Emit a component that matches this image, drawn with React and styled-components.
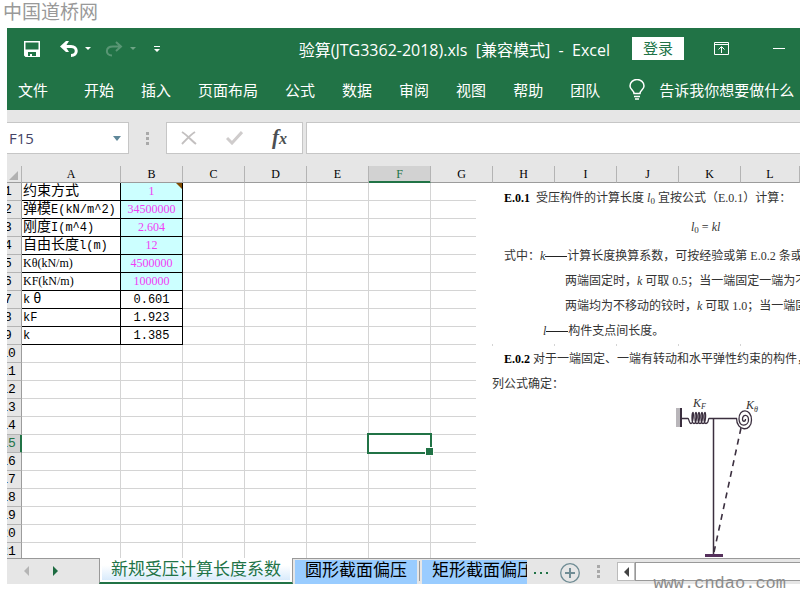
import React, { useState } from "react";
import styled, { createGlobalStyle, css } from "styled-components";

const COLUMNS = ["A", "B", "C", "D", "E", "F", "G", "H", "I", "J", "K", "L"];
const ROW_COUNT = 21;
const MENUS = ["开始", "插入", "页面布局", "公式", "数据", "审阅", "视图", "帮助", "团队"];

const DATA = [
  { cjk: "约束方式", value: "1", input: true, note: true },
  { cjk: "弹模", latin: "E(kN/m^2)", value: "34500000", input: true },
  { cjk: "刚度", latin: "I(m^4)", value: "2.604", input: true },
  { cjk: "自由长度", latin: "l(m)", value: "12", input: true },
  { serif: "Kθ(kN/m)", value: "4500000", input: true },
  { serif: "KF(kN/m)", value: "100000", input: true },
  { latin: "k", theta: "θ", value: "0.601" },
  { latin: "kF", value: "1.923" },
  { latin: "k", value: "1.385" },
];

const TitleBar = () => (
  <Bar $pad>
    <QuickAccess>
      <IconButton aria-label="保存">
        <svg width="16" height="16" viewBox="0 0 16 16">
          <path fill="#fff" fillRule="evenodd" d="M0 0h16v16H1.500L0 14.500zM1.500 1.500v7h13v-7zM4 11v4h2v-2h2v2h4v-4z" />
        </svg>
      </IconButton>
      <IconButton aria-label="撤消" $space={20}>
        <svg width="18" height="16" viewBox="0 0 18 16">
          <path fill="none" stroke="#fff" strokeWidth="3" d="M2 5.500h9c7 0 7 9 0 9" />
          <path fill="#fff" d="M0 5.500 6 0h3L5.500 5.500 9 11H6z" />
        </svg>
      </IconButton>
      <Caret $space={7} />
      <IconButton aria-label="恢复" $space={14} $dim>
        <svg width="18" height="16" viewBox="0 0 18 16">
          <path fill="none" stroke="#fff" strokeWidth="2" d="M15 5.500H8c-8 0-8 9-1 9M11 1l5 4.500L11 10" />
        </svg>
      </IconButton>
      <Caret $space={7} $dim />
      <IconButton aria-label="自定义快速访问工具栏" $space={18}>
        <svg width="6" height="6" viewBox="0 0 6 6">
          <path fill="#fff" d="M0 0h6v1H0zM0 3h6L3 6z" />
        </svg>
      </IconButton>
    </QuickAccess>
    <Title>验算(JTG3362-2018).xls&nbsp; [兼容模式]&nbsp; -&nbsp; Excel</Title>
    <LoginButton>登录</LoginButton>
    <IconButton aria-label="功能区显示选项" $space={30}>
      <svg width="15" height="13" viewBox="0 0 15 13" fill="none" stroke="#fff">
        <path d="M.5.5h14v12H.5zM.5 2.500h14M7.500 11V5M4.500 7.500l3-3 3 3" />
      </svg>
    </IconButton>
    <IconButton aria-label="最小化" $space={44}>
      <svg width="12" height="3" viewBox="0 0 12 3">
        <path fill="#fff" d="M0 1h12v1H0z" />
      </svg>
    </IconButton>
  </Bar>
);

const MenuBar = () => (
  <Bar as="nav">
    <FileMenu>文件</FileMenu>
    <Menus>
      {MENUS.map((name) => (
        <MenuButton key={name}>{name}</MenuButton>
      ))}
    </Menus>
    <TellMe>
      <svg width="16" height="21" viewBox="0 0 16 21" fill="none" stroke="#fff" strokeWidth="1.500">
        <path d="M5 14.500c0-3-4-4-4-7.500a7 6.500 0 0 1 14 0c0 3.500-4 4.500-4 7.500zM5 17.500h6M6 20h4" />
      </svg>
      告诉我你想要做什么
    </TellMe>
  </Bar>
);

const FormulaBar = () => (
  <FormulaRow>
    <NameBox>
      <input aria-label="名称框" defaultValue="F15" />
      <svg width="8" height="5" viewBox="0 0 8 5">
        <path fill="#5f8799" d="M0 0h8L4 5z" />
      </svg>
    </NameBox>
    <Dots />
    <FormulaActions>
      <button aria-label="取消">
        <svg width="16" height="14" viewBox="0 0 16 14" fill="none" stroke="#c3c0c0" strokeWidth="2">
          <path d="M1 1c5 3 9 8 14 12M14 1C9 4 5 9 1 13" />
        </svg>
      </button>
      <button aria-label="输入">
        <svg width="17" height="14" viewBox="0 0 17 14" fill="none" stroke="#cfcccc" strokeWidth="3">
          <path d="M1 7l5 5L16 1" />
        </svg>
      </button>
      <FxButton aria-label="插入函数">
        f<small>x</small>
      </FxButton>
    </FormulaActions>
    <FormulaInput aria-label="编辑栏" />
  </FormulaRow>
);

const LabelCell = ({ row }) => (
  <Cell $boxed $mono={!row.serif}>
    {row.cjk && <Cjk>{row.cjk}</Cjk>}
    {row.latin}
    {row.theta && <Wide>{row.theta}</Wide>}
    {row.serif}
  </Cell>
);

const Grid = () => (
  <Table>
    <colgroup>
      <Col $w={27} />
      <Col $w={99} />
      {COLUMNS.slice(1, -1).map((c) => (
        <Col key={c} $w={62} />
      ))}
      <col />
    </colgroup>
    <thead>
      <tr>
        <ColHead aria-label="全选">
          <svg width="9" height="9" viewBox="0 0 9 9">
            <path fill="#b1b1b1" d="M9 0v9H0z" />
          </svg>
        </ColHead>
        {COLUMNS.map((c) => (
          <ColHead key={c} $active={c === "F"}>
            {c}
          </ColHead>
        ))}
      </tr>
    </thead>
    <tbody>
      {Array.from({ length: ROW_COUNT }, (_, i) => {
        const row = DATA[i];
        return (
          <tr key={i}>
            <RowHead $active={i === 14}>{i + 1}</RowHead>
            {row ? <LabelCell row={row} /> : <Cell />}
            {row ? (
              <Cell $boxed $center $input={row.input} $mono={!row.input} $note={row.note}>
                {row.value}
              </Cell>
            ) : (
              <Cell />
            )}
            {COLUMNS.slice(2).map((c) => (
              <Cell key={c} $selected={i === 14 && c === "F"} />
            ))}
          </tr>
        );
      })}
    </tbody>
  </Table>
);

const Diagram = () => (
  <svg width="140" height="162" viewBox="660 397 140 162" fill="none" stroke="#3b2f3f">
    <path fill="#b9b6ba" stroke="none" d="M676 408h4v19h-4z" />
    <path strokeWidth="2" d="M681 408v19" />
    <path strokeWidth="1.300" d="M682 418.500h6c1 0 1 5 3 5s3-11 2-11-2 11 1 11 3-11 2-11-2 11 1 11 3-11 2-11-2 11 1 11 3-11 2-11-2 11 1 11 3-11 2-11-2 11 1 11 2-5 3-5h28" />
    <path strokeWidth="1.300" d="M736.500 418c0 14 15 14 15 2 0-12-13-12-12.500-1 .5 9 9.500 7 9.500 1 0-6-6-6-6-1 0 3 3 3 3 0" />
    <path strokeWidth="1.500" d="M713.500 418v137" />
    <path stroke="#55305c" strokeWidth="3" d="M705 555.500h18" />
    <path strokeWidth="1.600" strokeDasharray="6 5" d="M741 428l-27 124" />
    <DiagramText x="693" y="407">
      K
    </DiagramText>
    <DiagramText x="701" y="409" $small>
      F
    </DiagramText>
    <DiagramText x="746" y="409">
      K
    </DiagramText>
    <DiagramText x="754" y="412" $small>
      θ
    </DiagramText>
  </svg>
);

const ClausePicture = () => (
  <Picture>
    <Line $indent={28} $top={3}>
      <b>E.0.1</b>&ensp;受压构件的计算长度 <i>l</i>
      <Zero>0</Zero> 宜按公式（E.0.1）计算：
    </Line>
    <Line $indent={215} $top={4}>
      <i>l</i>
      <Zero>0</Zero> = <i>kl</i>
    </Line>
    <Line $indent={28} $top={4}>
      式中：<i>k</i>
      <Dash />
      计算长度换算系数，可按经验或第 E.0.2 条或
    </Line>
    <Line $indent={89}>
      两端固定时，<i>k</i> 可取 0.5；当一端固定一端为不
    </Line>
    <Line $indent={89}>
      两端均为不移动的铰时，<i>k</i> 可取 1.0；当一端固
    </Line>
    <Line $indent={67}>
      <i>l</i>
      <Dash />
      构件支点间长度。
    </Line>
    <Ticks />
    <Line $indent={28}>
      <b>E.0.2</b> 对于一端固定、一端有转动和水平弹性约束的构件，
    </Line>
    <Line $indent={16}>列公式确定：</Line>
    <Figure>
      <Diagram />
    </Figure>
  </Picture>
);

const SheetTabs = () => {
  const [tab, setTab] = useState(0);
  return (
    <TabBar>
      <TabNav>
        <button aria-label="上一张">
          <svg width="5" height="10" viewBox="0 0 5 10">
            <path fill="#b5b5b5" d="M5 0v10L0 5z" />
          </svg>
        </button>
        <button aria-label="下一张">
          <svg width="5" height="10" viewBox="0 0 5 10">
            <path fill="#1d6b41" d="M0 0v10l5-5z" />
          </svg>
        </button>
      </TabNav>
      <Tab $active={tab === 0} onClick={() => setTab(0)}>
        新规受压计算长度系数
      </Tab>
      <Tab $active={tab === 1} onClick={() => setTab(1)}>
        圆形截面偏压
      </Tab>
      <Separator />
      <Tab $cut $active={tab === 2} onClick={() => setTab(2)}>
        矩形截面偏压
      </Tab>
      <MoreTabs aria-label="更多工作表">
        <svg width="14" height="2" viewBox="0 0 14 2">
          <path fill="#217346" d="M0 0h2v2H0zM6 0h2v2H6zM12 0h2v2h-2z" />
        </svg>
      </MoreTabs>
      <AddTab aria-label="新工作表">
        <svg width="20" height="20" viewBox="0 0 20 20" fill="none" stroke="#6f8c94">
          <circle cx="10" cy="10" r="9.300" strokeWidth="1.300" />
          <path strokeWidth="2" d="M5 10h10M10 5v10" />
        </svg>
      </AddTab>
      <Dots />
      <ScrollBar>
        <button aria-label="向左滚动">
          <svg width="5" height="10" viewBox="0 0 5 10">
            <path fill="#444" d="M5 0v10L0 5z" />
          </svg>
        </button>
        <Thumb />
      </ScrollBar>
    </TabBar>
  );
};

const App = () => (
  <Page>
    <GlobalStyle />
    <SiteName>中国道桥网</SiteName>
    <Workbook>
      <Ribbon>
        <TitleBar />
        <MenuBar />
      </Ribbon>
      <FormulaBar />
      <Sheet>
        <Grid />
        <ClausePicture />
      </Sheet>
      <SheetTabs />
    </Workbook>
    <SiteUrl>www.cndao.com</SiteUrl>
  </Page>
);

const GlobalStyle = createGlobalStyle`
  * {
    box-sizing: border-box;
  }
  body {
    margin: 0;
    background: #fff;
    font-family: "Open Sans", "Noto Sans CJK SC", sans-serif;
  }
  button {
    margin: 0;
    padding: 0;
    border: none;
    background: none;
    color: inherit;
    font: inherit;
    cursor: pointer;
  }
  svg {
    display: block;
    flex: none;
  }
`;

const Page = styled.div`
  position: relative;
  display: flex;
  flex-direction: column;
  height: 100vh;
  padding: 0 0 16px 7px;
  overflow: hidden;
`;

const SiteName = styled.div`
  flex: none;
  height: 28px;
  margin-left: -4px;
  color: #999;
  font-size: 19px;
  line-height: 25px;
`;

const SiteUrl = styled.div`
  position: absolute;
  right: 14px;
  bottom: 4px;
  color: #8c8c8c;
  font-family: "Liberation Mono", monospace;
  font-size: 17px;
  line-height: 24px;
`;

const Workbook = styled.main`
  display: flex;
  flex: 1;
  flex-direction: column;
  min-height: 0;
  background: #e6e6e6;
`;

const Ribbon = styled.header`
  flex: none;
  background: #217346;
  color: #fff;
  font-size: 15px;
  white-space: nowrap;
  overflow: hidden;
`;

const Bar = styled.div`
  display: flex;
  align-items: center;
  height: 41px;
  padding-right: ${({ $pad }) => ($pad ? 15 : 0)}px;
`;

const QuickAccess = styled.div`
  display: flex;
  flex: none;
  align-items: center;
  padding-left: 17px;
`;

const IconButton = styled.button`
  && {
    flex: none;
    margin-left: ${({ $space }) => $space || 0}px;
    opacity: ${({ $dim }) => ($dim ? 0.25 : 1)};
  }
`;

const Caret = styled.span`
  margin-left: ${({ $space }) => $space}px;
  border: 3px solid transparent;
  border-top-color: #fff;
  border-bottom: none;
  opacity: ${({ $dim }) => ($dim ? 0.35 : 1)};
`;

const Title = styled.div`
  flex: 1;
  padding-right: 22px;
  font-size: 16px;
  text-align: right;
`;

const LoginButton = styled.button`
  && {
    flex: none;
    width: 52px;
    height: 23px;
    background: #fff;
    color: #217346;
    line-height: 23px;
  }
`;

const MenuButton = styled.button`
  flex: none;
`;

const FileMenu = styled(MenuButton)`
  && {
    margin: 0 36px 0 11px;
  }
`;

const Menus = styled.div`
  display: flex;
  flex: none;
  gap: 27px;
`;

const TellMe = styled.button`
  && {
    display: flex;
    flex: none;
    align-items: center;
    gap: 14px;
    margin-left: 29px;
  }
`;

const FormulaRow = styled.div`
  display: flex;
  flex: none;
  align-items: center;
  height: 56px;
`;

const NameBox = styled.div`
  display: flex;
  flex: none;
  align-items: center;
  width: 122px;
  height: 32px;
  padding-right: 7px;
  border: 1px solid #c6c6c6;
  border-left: none;
  background: #fff;
  input {
    flex: 1;
    min-width: 0;
    padding: 0 2px;
    border: none;
    outline: none;
    color: #444466;
    font-family: "Open Sans", sans-serif;
    font-size: 15px;
  }
`;

const Dots = styled.span`
  flex: none;
  width: 3px;
  height: 13px;
  margin: 0 17px;
  background: repeating-linear-gradient(#a9a9a9 0 3px, transparent 3px 5px);
`;

const FormulaActions = styled.div`
  display: flex;
  flex: none;
  align-items: center;
  justify-content: space-between;
  width: 137px;
  height: 32px;
  margin-right: 3px;
  padding: 0 15px 0 14px;
  border: 1px solid #c6c6c6;
  background: #fff;
`;

const FxButton = styled.button`
  && {
    color: #4c4f52;
    font-family: "Liberation Serif", serif;
    font-size: 21px;
    font-style: italic;
    font-weight: bold;
    line-height: 24px;
  }
  small {
    font-size: 16px;
  }
`;

const FormulaInput = styled.input`
  flex: 1;
  min-width: 0;
  height: 32px;
  border: 1px solid #c6c6c6;
  border-right: none;
  outline: none;
  background: #fff;
`;

const Sheet = styled.section`
  position: relative;
  flex: 1;
  min-height: 0;
  overflow: hidden;
  background: #fff;
`;

/* the row numbers are scrolled half out of view on the left */
const Table = styled.table`
  width: calc(100% + 12px);
  margin-left: -12px;
  border-collapse: separate;
  border-spacing: 0;
  table-layout: fixed;
  font-family: "Liberation Serif", "Noto Sans CJK SC", serif;
  font-size: 12px;
`;

const Col = styled.col`
  width: ${({ $w }) => $w}px;
`;

const headCell = css`
  background: ${({ $active }) => ($active ? "#d2d2d2" : "#e6e6e6")};
  color: ${({ $active }) => ($active ? "#217346" : "#000")};
  font-weight: normal;
`;

const ColHead = styled.th`
  ${headCell}
  height: 17px;
  padding: 1px 0 0;
  border-right: 1px solid #b4b4b4;
  border-bottom: 1px solid ${({ $active }) => ($active ? "#217346" : "#9c9c9c")};
  box-shadow: ${({ $active }) => ($active ? "inset 0 -1px #217346" : "none")};
  line-height: 15px;
  svg {
    margin: 2px 3px 0 auto;
  }
`;

const RowHead = styled.th`
  ${headCell}
  height: 18px;
  padding: 1px 0 0;
  border-right: 1px solid ${({ $active }) => ($active ? "#217346" : "#9c9c9c")};
  border-bottom: 1px solid #b4b4b4;
  box-shadow: ${({ $active }) => ($active ? "inset -1px 0 #217346" : "none")};
  font-family: "Liberation Mono", monospace;
  font-size: 13px;
  line-height: 16px;
`;

const Cell = styled.td`
  position: relative;
  height: 18px;
  padding: ${({ $mono }) => ($mono ? 2 : 0)}px 1px 0;
  border-right: 1px solid #d4d4d4;
  border-bottom: 1px solid #d4d4d4;
  line-height: ${({ $mono }) => ($mono ? 15 : 17)}px;
  white-space: nowrap;
  ${({ $boxed }) => $boxed && "border-color: #000;"}
  ${({ $center }) => $center && "text-align: center;"}
  ${({ $mono }) => $mono && `font-family: "Liberation Mono", "Noto Sans CJK SC", monospace;`}
  ${({ $input }) => $input && "background: #ccffff; color: #f03cf5;"}
  ${({ $note }) =>
    $note &&
    css`
      &::after {
        content: "";
        position: absolute;
        top: 0;
        right: 0;
        border: 3px solid #7f4a00;
        border-left-color: transparent;
        border-bottom-color: transparent;
      }
    `}
  ${({ $selected }) =>
    $selected &&
    css`
      &::before {
        content: "";
        position: absolute;
        inset: -2px;
        z-index: 1;
        border: 2px solid #217346;
      }
      &::after {
        content: "";
        position: absolute;
        right: -4px;
        bottom: -4px;
        z-index: 1;
        width: 7px;
        height: 7px;
        border: 1px solid #fff;
        background: #217346;
      }
    `}
`;

/* zero line height keeps the larger glyphs from growing the row */
const Cjk = styled.span`
  font-family: "Noto Sans CJK SC", sans-serif;
  font-size: 14px;
  line-height: 0;
`;

const Wide = styled(Cjk)`
  padding: 0 3px;
`;

const Picture = styled.div`
  position: absolute;
  top: 17px;
  right: 0;
  bottom: 0;
  left: 469px;
  overflow: hidden;
  background: #fff;
  color: #333;
  font-family: "Liberation Serif", "Noto Sans CJK SC", serif;
  font-size: 12px;
  b {
    color: #000;
  }
`;

const Line = styled.p`
  margin: ${({ $top }) => $top || 0}px 0 0 ${({ $indent }) => $indent}px;
  line-height: 25px;
  white-space: nowrap;
`;

const Zero = styled.span`
  font-size: 9px;
  vertical-align: -2px;
  line-height: 1;
`;

const Dash = styled.span`
  display: inline-block;
  width: 22px;
  height: 1px;
  background: #222;
  vertical-align: 3px;
`;

const Ticks = styled.div`
  height: 3px;
  margin-left: 15px;
  background: repeating-linear-gradient(90deg, transparent 0 1px, #d4d4d4 1px 2px, transparent 2px 62px) no-repeat;
  background-size: 100% 2px;
`;

const Figure = styled.div`
  display: flex;
  margin-left: 184px;
`;

const DiagramText = styled.text`
  fill: #333;
  stroke: none;
  font-size: ${({ $small }) => ($small ? 8 : 12)}px;
  font-style: italic;
`;

const TabBar = styled.footer`
  display: flex;
  flex: none;
  align-items: center;
  height: 26px;
  overflow: hidden;
  background: linear-gradient(#999 0 1px, #e6e6e6 1px);
`;

const TabNav = styled.div`
  display: flex;
  flex: none;
  gap: 24px;
  width: 92px;
  padding-left: 17px;
`;

const Tab = styled.button`
  && {
    flex: none;
    align-self: flex-end;
    height: 24px;
    padding: 0 10px 5px;
    overflow: hidden;
    background: #99ccff;
    color: #000;
    font-size: 17px;
    line-height: 19px;
    white-space: nowrap;
    ${({ $cut }) => $cut && "width: 105px; padding-right: 0; text-align: left;"}
    ${({ $active }) =>
      $active &&
      css`
        height: 26px;
        margin-right: 2px;
        padding: 0 11px 3px;
        border-left: 1px solid #999;
        border-right: 1px solid #999;
        border-bottom: 2px solid #217346;
        background: linear-gradient(#fff 30%, #d3e8fb);
        box-shadow: inset 0 0 0 2px #fff;
        color: #217346;
      `}
  }
`;

const Separator = styled.span`
  flex: none;
  width: 1px;
  height: 20px;
  margin: 0 2px;
  background: #999;
`;

const MoreTabs = styled.button`
  && {
    margin: 4px 12px 0 7px;
  }
`;

const AddTab = styled.button`
  && {
    margin-top: 4px;
  }
`;

const ScrollBar = styled.div`
  display: flex;
  flex: 1;
  align-self: flex-start;
  height: 19px;
  margin-top: 4px;
  button {
    display: flex;
    align-items: center;
    justify-content: center;
    width: 18px;
    border: 1px solid #bbb;
    background: #fff;
  }
`;

const Thumb = styled.div`
  flex: 1;
  border: 1px solid #999;
  border-right: none;
  background: #fff;
`;

export default App;
